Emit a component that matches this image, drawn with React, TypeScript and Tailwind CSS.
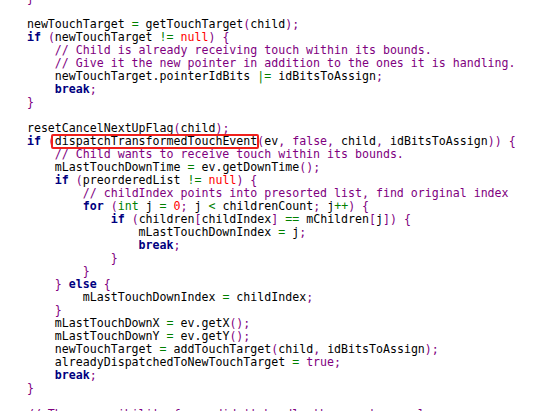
import React from "react";

const code = [
  "    }",
  "",
  "    newTouchTarget = getTouchTarget(child);",
  "    if (newTouchTarget != null) {",
  "        // Child is already receiving touch within its bounds.",
  "        // Give it the new pointer in addition to the ones it is handling.",
  "        newTouchTarget.pointerIdBits |= idBitsToAssign;",
  "        break;",
  "    }",
  "",
  "    resetCancelNextUpFlag(child);",
  "    if (dispatchTransformedTouchEvent(ev, false, child, idBitsToAssign)) {",
  "        // Child wants to receive touch within its bounds.",
  "        mLastTouchDownTime = ev.getDownTime();",
  "        if (preorderedList != null) {",
  "            // childIndex points into presorted list, find original index",
  "            for (int j = 0; j < childrenCount; j++) {",
  "                if (children[childIndex] == mChildren[j]) {",
  "                    mLastTouchDownIndex = j;",
  "                    break;",
  "                }",
  "            }",
  "        } else {",
  "            mLastTouchDownIndex = childIndex;",
  "        }",
  "        mLastTouchDownX = ev.getX();",
  "        mLastTouchDownY = ev.getY();",
  "        newTouchTarget = addTouchTarget(child, idBitsToAssign);",
  "        alreadyDispatchedToNewTouchTarget = true;",
  "        break;",
  "    }",
  "",
  "    // The accessibility focus didn't handle the event, so clear",
];

const keywords = ["if", "else", "for", "break", "return", "while"];

type Kind = "kw" | "type" | "lit" | "bool" | "num" | "op" | "punct" | "comment" | "plain";

const styles: Record<Kind, string> = {
  kw: "font-bold text-[#000080]",
  type: "text-[#008000]",
  lit: "text-[#ff0000]",
  bool: "text-[#800080]",
  num: "text-[#ff0000]",
  op: "text-[#008000]",
  punct: "text-[#800080]",
  comment: "text-[#800080]",
  plain: "text-black",
};

const tokenize = (line: string) => {
  const out: { text: string; kind: Kind }[] = [];
  const re = /(\/\/.*)|([A-Za-z_]\w*)|(\d+)|([=!<>|+\-]+)|([(){}\[\];,])|(\s+|.)/g;
  let m: RegExpExecArray | null;
  while ((m = re.exec(line))) {
    if (m[1]) out.push({ text: m[1], kind: "comment" });
    else if (m[2]) {
      const w = m[2];
      let kind: Kind = "plain";
      if (keywords.includes(w)) kind = "kw";
      else if (w === "int") kind = "type";
      else if (w === "null") kind = "lit";
      else if (w === "true" || w === "false") kind = "bool";
      out.push({ text: w, kind });
    } else if (m[3]) out.push({ text: m[3], kind: "num" });
    else if (m[4]) out.push({ text: m[4], kind: "op" });
    else if (m[5]) out.push({ text: m[5], kind: "punct" });
    else out.push({ text: m[6], kind: "plain" });
  }
  return out;
};

const App: React.FC = () => {
  return (
    <div className="h-[411px] w-[553px] overflow-hidden bg-white">
      <pre className="-ml-px -mt-[8px] font-['DejaVu_Sans_Mono',monospace] text-[11.6px] leading-[13px]">
        {code.map((line, i) => (
          <div key={i} className="h-[13px] whitespace-pre">
            {tokenize(line).map((t, j) =>
              t.text === "dispatchTransformedTouchEvent" ? (
                <span key={j} className="relative inline-block h-[13px]">
                  {t.text}
                  {/* highlight box */}
                  <span className="absolute -left-[4px] -right-[2px] -top-px bottom-[-1px] rounded-[2px] border-2 border-[#f0201c]" />
                </span>
              ) : (
                <span key={j} className={styles[t.kind]}>
                  {t.text}
                </span>
              )
            )}
          </div>
        ))}
      </pre>
    </div>
  );
};

export default App;
